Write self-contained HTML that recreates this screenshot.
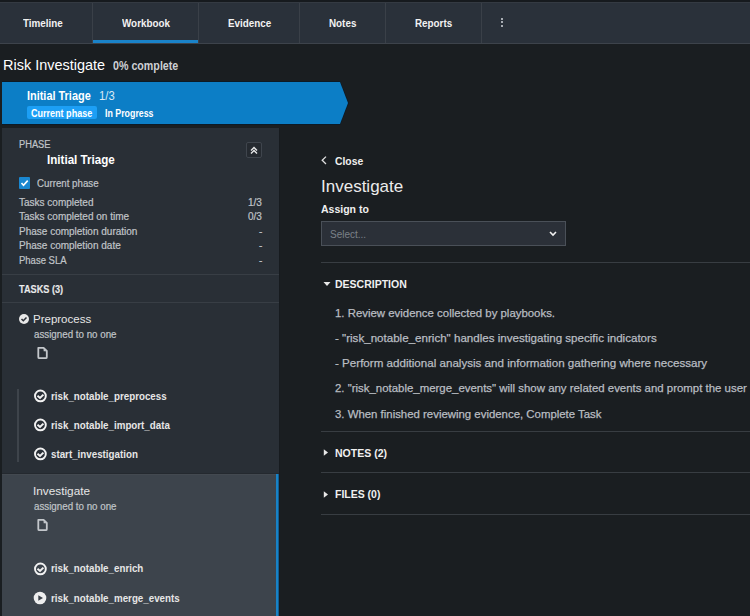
<!DOCTYPE html>
<html><head><meta charset="utf-8">
<style>
*{margin:0;padding:0;box-sizing:border-box}
html,body{width:750px;height:616px;overflow:hidden;background:#1a1e21;font-family:"Liberation Sans",sans-serif;color:#fff}
.a{position:absolute;white-space:nowrap;transform-origin:0 0}
#topband{position:absolute;left:0;top:0;width:750px;height:3px;background:#161a1e}
#tabs{position:absolute;left:0;top:2px;width:750px;height:42px;background:#2a313a;border-top:1px solid #343a42;border-bottom:1px solid #3d434b}
.sep{position:absolute;top:3px;width:1px;height:40px;background:#3a4048}
.tab{position:absolute;top:17px;font-size:11.5px;font-weight:bold;color:#f2f2f2;transform:scaleX(0.856);transform-origin:0 0}
#ul{position:absolute;left:93px;top:40px;width:105px;height:3px;background:#1a83c9}
.dot{position:absolute;left:501px;width:2px;height:2px;background:#a8adb3}
#title{position:absolute;left:3px;top:56px;font-size:15px;color:#fff;transform:scaleX(0.965);transform-origin:0 0}
#pct{position:absolute;left:113px;top:59px;font-size:12px;font-weight:bold;color:#cdd0d4;transform:scaleX(0.89);transform-origin:0 0}
#phasebar{position:absolute;left:1px;top:81px;width:349px;height:44px}
.phase-t{position:absolute;left:27px;top:89px;font-size:12px;font-weight:bold;color:#fff;transform:scaleX(0.91);transform-origin:0 0}
.phase-n{position:absolute;left:99px;top:89px;font-size:12px;color:#d9e9f5;transform:scaleX(0.94);transform-origin:0 0}
#badge{position:absolute;left:27px;top:106px;width:70px;height:13px;background:#1c9ff5;border-radius:2px}
.badge-t{position:absolute;left:31px;top:107px;font-size:10.5px;font-weight:bold;color:#fff;transform:scaleX(0.86);transform-origin:0 0}
.prog{position:absolute;left:105px;top:107px;font-size:10.5px;font-weight:bold;color:#fff;transform:scaleX(0.84);transform-origin:0 0}
#panel{position:absolute;left:2px;top:128px;width:277px;height:489px;background:#292f36}
.lbl{font-size:10px;color:#c0c4c8;-webkit-text-stroke:0.2px #c0c4c8}
.hr{position:absolute;height:1px;background:#383e45}
#sel{position:absolute;left:2px;top:474px;width:277px;height:142px;background:#3d444c;border-top:1px solid #434950}
#seltop{position:absolute;left:2px;top:473px;width:277px;height:1px;background:#24292f}
#selbar{position:absolute;left:276px;top:474px;width:3px;height:142px;background:#1882c6;border-right:1px solid #125d8f}
#pedge{position:absolute;left:279px;top:128px;width:1px;height:488px;background:#171b1f}
.bold{font-weight:bold}
.sx{transform-origin:0 0}
.rp{color:#e6e6e6}
.desc{position:absolute;left:335px;font-size:11.5px;color:#b9bdc2;-webkit-text-stroke:0.25px #b9bdc2}
.rhr{position:absolute;left:321px;width:429px;height:1px;background:#383d42}
</style></head><body>
<div id="topband"></div>
<div id="tabs"></div>
<div class="sep" style="left:92px"></div>
<div class="sep" style="left:198px"></div>
<div class="sep" style="left:299px"></div>
<div class="sep" style="left:385px"></div>
<div class="sep" style="left:481px"></div>
<div id="ul"></div>
<div class="tab a" style="left:23px">Timeline</div>
<div class="tab a" style="left:122px">Workbook</div>
<div class="tab a" style="left:228px">Evidence</div>
<div class="tab a" style="left:329px">Notes</div>
<div class="tab a" style="left:415px">Reports</div>
<div class="dot" style="top:18px"></div>
<div class="dot" style="top:21px"></div>
<div class="dot" style="top:25px"></div>

<div id="title" class="a">Risk Investigate</div>
<div id="pct" class="a">0% complete</div>

<svg id="phasebar" width="349" height="44" viewBox="0 0 349 44">
  <polygon points="1,0 339,0 348,22 339,44 1,44" fill="#0c1a26"/>
  <polygon points="1,1 339,1 347,22 339,43 1,43" fill="#0c7ec6"/>
</svg>
<div class="phase-t a">Initial Triage</div>
<div class="phase-n a">1/3</div>
<div id="badge"></div>
<div class="badge-t a">Current phase</div>
<div class="prog a">In Progress</div>

<div id="panel"></div>
<div class="a lbl sx" style="left:19px;top:139px;transform:scaleX(0.93)">PHASE</div>
<div class="a bold sx" style="left:47px;top:153px;font-size:12.5px;transform:scaleX(0.929)">Initial Triage</div>
<div class="a" style="left:246px;top:142px;width:16px;height:16px;border:1px solid #3f454d;background:#252a30;border-radius:2px"></div>
<svg class="a" style="left:246px;top:142px" width="16" height="16" viewBox="0 0 16 16"><path d="M5 8.5 L8 5.5 L11 8.5 M5 11.5 L8 8.5 L11 11.5" stroke="#e8e8e8" stroke-width="1.4" fill="none"/></svg>
<div class="a" style="left:19px;top:177px;width:11px;height:12px;background:#1a87d0;border-radius:1px"></div>
<svg class="a" style="left:19px;top:177px" width="11" height="12" viewBox="0 0 11 12"><path d="M2.5 6 L4.5 8.2 L8.7 3.6" stroke="#fff" stroke-width="1.6" fill="none"/></svg>
<div class="a lbl sx" style="left:37px;top:178px;transform:scaleX(0.971)">Current phase</div>
<div class="a lbl" style="left:19px;top:196.5px">Tasks completed</div>
<div class="a lbl" style="left:19px;top:211px">Tasks completed on time</div>
<div class="a lbl" style="left:19px;top:225.5px">Phase completion duration</div>
<div class="a lbl" style="left:19px;top:240px">Phase completion date</div>
<div class="a lbl sx" style="left:19px;top:254.5px;transform:scaleX(0.95)">Phase SLA</div>
<div class="a lbl" style="left:248px;top:196.5px">1/3</div>
<div class="a lbl" style="left:248px;top:211px">0/3</div>
<div class="a lbl" style="left:259px;top:225.5px">-</div>
<div class="a lbl" style="left:259px;top:240px">-</div>
<div class="a lbl" style="left:259px;top:254.5px">-</div>
<div class="hr" style="left:2px;top:274px;width:277px"></div>
<div class="a lbl bold sx" style="left:19px;top:284px;color:#eee;transform:scaleX(0.917)">TASKS (3)</div>
<div class="hr" style="left:2px;top:302px;width:277px"></div>

<svg class="a" style="left:18px;top:313px" width="12" height="12" viewBox="0 0 12 12"><circle cx="6" cy="6" r="5" fill="#e8e8e8"/><path d="M3.5 6 L5.3 7.8 L8.5 4.5" stroke="#2a2f36" stroke-width="1.5" fill="none"/></svg>
<div class="a" style="left:33px;top:313px;font-size:11.5px;color:#e6e6e6">Preprocess</div>
<div class="a lbl sx" style="left:34px;top:329px;transform:scaleX(0.976)">assigned to no one</div>
<svg class="a" style="left:36px;top:346px" width="13" height="14" viewBox="0 0 13 14"><path d="M2.3 1.8 H7.6 L10.8 5 V11.2 Q10.8 12.2 9.8 12.2 H3.3 Q2.3 12.2 2.3 11.2 Z" stroke="#c3c7cb" stroke-width="1.8" fill="none" stroke-linejoin="round"/><path d="M7.6 2.6 V5.2 H10.2 Z" fill="#c3c7cb"/></svg>

<div class="a" style="left:17px;top:389px;width:2px;height:73px;background:#3e444b"></div>
<svg class="a" style="left:33px;top:389px" width="15" height="15" viewBox="0 0 15 15"><circle cx="7.4" cy="6.9" r="5.4" stroke="#f2f2f2" stroke-width="1.9" fill="none"/><path d="M4.5 6.8 L7 9 L10.4 5.6" stroke="#f2f2f2" stroke-width="2" fill="none"/></svg>
<div class="a bold rp" style="left:51px;top:390px;font-size:11px;transform:scaleX(0.888)">risk_notable_preprocess</div>
<svg class="a" style="left:33px;top:418px" width="15" height="15" viewBox="0 0 15 15"><circle cx="7.4" cy="6.9" r="5.4" stroke="#f2f2f2" stroke-width="1.9" fill="none"/><path d="M4.5 6.8 L7 9 L10.4 5.6" stroke="#f2f2f2" stroke-width="2" fill="none"/></svg>
<div class="a bold rp" style="left:51px;top:419px;font-size:11px;transform:scaleX(0.888)">risk_notable_import_data</div>
<svg class="a" style="left:33px;top:447px" width="15" height="15" viewBox="0 0 15 15"><circle cx="7.4" cy="6.9" r="5.4" stroke="#f2f2f2" stroke-width="1.9" fill="none"/><path d="M4.5 6.8 L7 9 L10.4 5.6" stroke="#f2f2f2" stroke-width="2" fill="none"/></svg>
<div class="a bold rp" style="left:51px;top:448px;font-size:11px;transform:scaleX(0.888)">start_investigation</div>

<div id="seltop"></div><div id="sel"></div>
<div id="selbar"></div><div id="pedge"></div>
<div class="a" style="left:33px;top:484px;font-size:11.8px;color:#e6e6e6">Investigate</div>
<div class="a lbl sx" style="left:34px;top:501px;transform:scaleX(0.976)">assigned to no one</div>
<svg class="a" style="left:36px;top:518px" width="13" height="14" viewBox="0 0 13 14"><path d="M2.3 1.8 H7.6 L10.8 5 V11.2 Q10.8 12.2 9.8 12.2 H3.3 Q2.3 12.2 2.3 11.2 Z" stroke="#c3c7cb" stroke-width="1.8" fill="none" stroke-linejoin="round"/><path d="M7.6 2.6 V5.2 H10.2 Z" fill="#c3c7cb"/></svg>
<svg class="a" style="left:33px;top:562px" width="15" height="15" viewBox="0 0 15 15"><circle cx="7.4" cy="6.9" r="5.4" stroke="#f2f2f2" stroke-width="1.9" fill="none"/><path d="M4.5 6.8 L7 9 L10.4 5.6" stroke="#f2f2f2" stroke-width="2" fill="none"/></svg>
<div class="a bold rp" style="left:51px;top:562px;font-size:11px;transform:scaleX(0.888)">risk_notable_enrich</div>
<svg class="a" style="left:33px;top:591px" width="14" height="14" viewBox="0 0 14 14"><circle cx="7" cy="7" r="6.3" fill="#eee"/><path d="M5.3 4.2 L10 7 L5.3 9.8 Z" fill="#3b4149"/></svg>
<div class="a bold rp" style="left:51px;top:592px;font-size:11px;transform:scaleX(0.888)">risk_notable_merge_events</div>

<!-- right -->
<svg class="a" style="left:321px;top:155px" width="8" height="11" viewBox="0 0 8 11"><path d="M5 1.6 L1.2 5.3 L5 9" stroke="#e0e0e0" stroke-width="1.3" fill="none"/></svg>
<div class="a bold sx" style="left:335px;top:155px;font-size:11px;color:#f0f0f0;transform:scaleX(0.94)">Close</div>
<div class="a" style="left:321px;top:177px;font-size:17px;color:#ebebeb">Investigate</div>
<div class="a bold sx" style="left:321px;top:203px;font-size:11px;color:#f0f0f0;transform:scaleX(0.954)">Assign to</div>
<div class="a" style="left:321px;top:221px;width:245px;height:25px;background:#2b3038;border:1px solid #4a5058"></div>
<div class="a" style="left:330px;top:229px;font-size:10px;color:#7b8188">Select...</div>
<svg class="a" style="left:548px;top:229px" width="10" height="9" viewBox="0 0 10 9"><path d="M2 3 L5 6 L8 3" stroke="#f0f0f0" stroke-width="1.6" fill="none"/></svg>
<div class="rhr" style="top:262px"></div>
<svg class="a" style="left:323px;top:281px" width="8" height="6" viewBox="0 0 8 6"><path d="M0.5 1 H7.5 L4 5 Z" fill="#e8e8e8"/></svg>
<div class="a sx" style="left:335px;top:278px;font-size:11.5px;font-weight:bold;color:#f0f0f0;transform:scaleX(0.913)">DESCRIPTION</div>
<div class="desc a" style="top:307px;transform:scaleX(0.992)">1. Review evidence collected by playbooks.</div>
<div class="desc a" style="top:332px;transform:scaleX(1.007)">- "risk_notable_enrich" handles investigating specific indicators</div>
<div class="desc a" style="top:357px;transform:scaleX(1.009)">- Perform additional analysis and information gathering where necessary</div>
<div class="desc a" style="top:382px;transform:scaleX(0.993)">2. "risk_notable_merge_events" will show any related events and prompt the user</div>
<div class="desc a" style="top:408px;transform:scaleX(0.991)">3. When finished reviewing evidence, Complete Task</div>
<div class="rhr" style="top:431px"></div>
<svg class="a" style="left:323px;top:449px" width="6" height="8" viewBox="0 0 6 8"><path d="M0.8 0.2 V6.7 L5 3.45 Z" fill="#e8e8e8"/></svg>
<div class="a sx" style="left:335px;top:447px;font-size:11px;font-weight:bold;color:#f0f0f0;transform:scaleX(0.957)">NOTES (2)</div>
<div class="rhr" style="top:472px"></div>
<svg class="a" style="left:323px;top:491px" width="6" height="8" viewBox="0 0 6 8"><path d="M0.8 0.2 V6.7 L5 3.45 Z" fill="#e8e8e8"/></svg>
<div class="a sx" style="left:335px;top:488px;font-size:11px;font-weight:bold;color:#f0f0f0;transform:scaleX(0.953)">FILES (0)</div>
<div class="rhr" style="top:514px"></div>
</body></html>
